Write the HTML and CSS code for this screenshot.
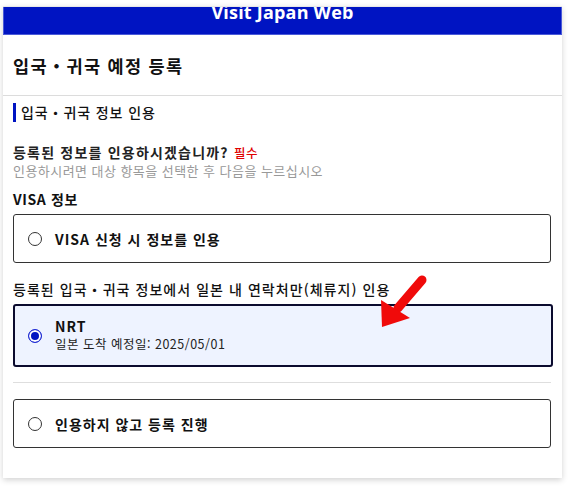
FILE: index.html
```html
<!DOCTYPE html>
<html lang="ko">
<head>
<meta charset="utf-8">
<link rel="stylesheet" href="styles.css">
</head>
<body>
<div class="card">
  <div class="header"><span class="brand">Visit Japan Web</span></div>
  <div class="title-bar"><h1 class="title">입국・귀국 예정 등록</h1></div>
  <div class="content">
    <h2 class="section">입국・귀국 정보 인용</h2>
    <div class="question">
      <div class="q-main">등록된 정보를 인용하시겠습니까? <span class="req">필수</span></div>
      <div class="q-sub">인용하시려면 대상 항목을 선택한 후 다음을 누르십시오</div>
    </div>
    <div class="group-label visa">VISA 정보</div>
    <div class="option">
      <span class="radio"></span>
      <span class="opt-label">VISA 신청 시 정보를 인용</span>
    </div>
    <div class="group-label reg">등록된 입국・귀국 정보에서 일본 내 연락처만(체류지) 인용</div>
    <div class="option selected">
      <span class="radio on"></span>
      <div class="opt-text">
        <span class="opt-label">NRT</span>
        <span class="opt-sub">일본 도착 예정일: 2025/05/01</span>
      </div>
    </div>
    <hr class="divider">
    <div class="option">
      <span class="radio"></span>
      <span class="opt-label">인용하지 않고 등록 진행</span>
    </div>
  </div>
</div>
<svg class="arrow" width="70" height="70" viewBox="0 0 70 70">
  <line x1="52" y1="10" x2="28" y2="38" stroke="#f00a0a" stroke-width="9" stroke-linecap="round"/>
  <polygon points="12,57 11,30 40,48" fill="#f00a0a"/>
</svg>
</body>
</html>
```

FILE: styles.css
```css
* { box-sizing: border-box; }
html, body { margin: 0; padding: 0; background: #ffffff; }
body {
  font-family: "Noto Sans CJK KR", "Noto Sans", sans-serif;
  color: #111;
  width: 569px;
  height: 489px;
  overflow: hidden;
  position: relative;
}
.card {
  margin: 6px 0 0 3px;
  width: 559px;
  height: 472px;
  background: #fff;
  box-shadow: 0 2px 6px rgba(0,0,0,0.18);
  border-top: 1px solid #e8e8e8;
  display: flex;
  flex-direction: column;
}
.header {
  height: 28px;
  background: #0014c2;
  overflow: hidden;
  text-align: center;
  border: 1px solid #4a5ad8;
  border-top: none;
}
.brand {
  display: block;
  margin-top: -4px;
  font-family: "Open Sans", "Noto Sans", sans-serif;
  font-weight: 700;
  font-size: 18px;
  line-height: 18px;
  color: #fff;
  letter-spacing: 0.2px;
}
.title-bar {
  height: 61px;
  display: flex;
  align-items: center;
  padding-left: 10px;
  border-bottom: 1px solid #dcdcdc;
}
.title {
  margin: 0;
  font-size: 17.5px;
  font-weight: 700;
  letter-spacing: 1.3px;
  color: #111;
}
.content {
  padding: 7px 10px 0 10px;
  display: flex;
  flex-direction: column;
}
.section {
  margin: 0;
  height: 19px;
  border-left: 3px solid #0014c2;
  padding-left: 5px;
  font-size: 14px;
  font-weight: 500;
  letter-spacing: 0.9px;
  line-height: 19px;
  color: #111;
}
.question { margin-top: 21px; }
.q-main {
  font-size: 14px;
  font-weight: 700;
  letter-spacing: 1.2px;
  line-height: 18px;
  color: #222;
}
.req { color: #e00000; font-size: 12.5px; font-weight: 500; letter-spacing: 0.5px; }
.q-sub {
  font-size: 13px;
  letter-spacing: 0.45px;
  line-height: 17px;
  color: #999;
}
.group-label {
  font-size: 14px;
  line-height: 18px;
  color: #111;
}
.group-label.visa { margin-top: 11px; font-weight: 700; letter-spacing: 0.6px; }
.group-label.reg { margin-top: 17px; font-weight: 500; letter-spacing: 1.05px; }
.option {
  margin-top: 6px;
  width: 538px;
  height: 49px;
  border: 1px solid #333;
  border-radius: 3px;
  display: flex;
  align-items: center;
  padding-left: 14px;
  gap: 13px;
}
.option.selected {
  margin-top: 6px;
  width: 540px;
  height: 63px;
  border: 2px solid #0b0b2e;
  background: #eef3ff;
  padding-left: 13px;
}
.radio {
  flex: none;
  width: 14px;
  height: 14px;
  border-radius: 50%;
  border: 1px solid #333;
  background: #fff;
}
.radio.on {
  border: 1px solid #1f2bd6;
  background: #0014c2;
  box-shadow: inset 0 0 0 2px #fff;
}
.opt-label {
  font-size: 14px;
  font-weight: 700;
  letter-spacing: 1px;
  line-height: 18px;
  color: #111;
}
.opt-text { display: flex; flex-direction: column; margin-top: -2px; }
.opt-sub {
  font-size: 12.5px;
  letter-spacing: 0.5px;
  line-height: 18px;
  color: #222;
}
.divider {
  margin: 15px 0 0 0;
  width: 538px;
  border: none;
  border-top: 1px solid #dedede;
  height: 0;
}
.divider + .option { margin-top: 16px; }
.arrow {
  position: absolute;
  left: 370px;
  top: 270px;
}
```
